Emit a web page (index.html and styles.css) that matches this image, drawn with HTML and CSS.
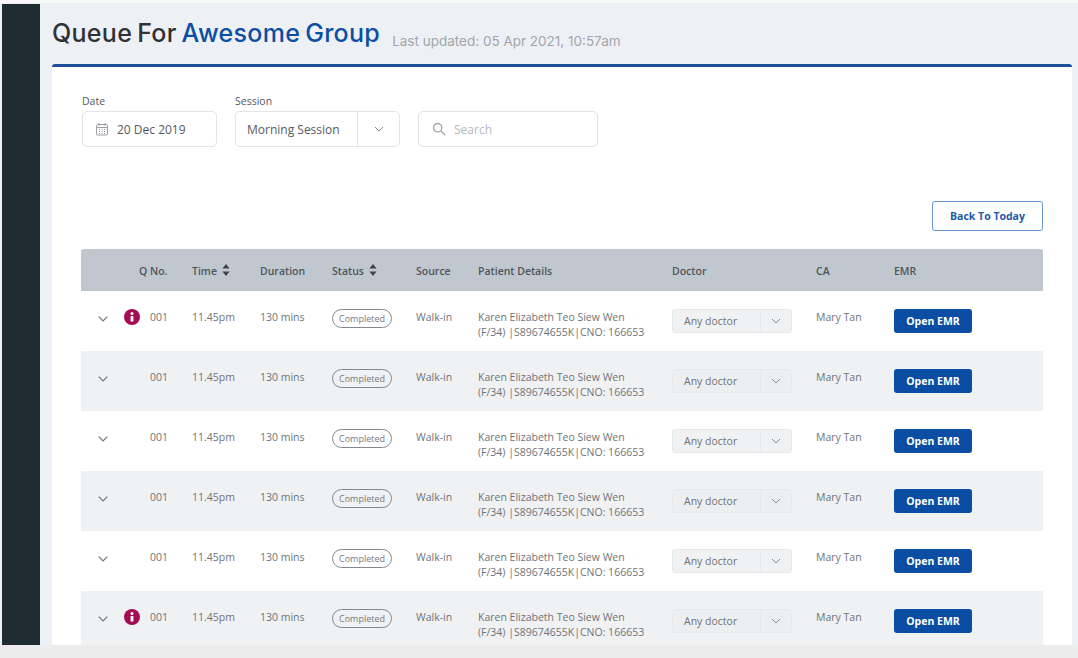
FILE: index.html
```html
<!DOCTYPE html>
<html lang="en">
<head>
  <meta charset="UTF-8" />
  <title>Queue For Awesome Group</title>
  <link rel="stylesheet" href="styles.css">
</head>
<body>
  <div class="app">
    <aside class="sidebar"></aside>
    <div class="content">
      <header class="page-head">
        <h1>Queue For <span>Awesome Group</span></h1>
        <p>Last updated: 05 Apr 2021, 10:57am</p>
      </header>

      <main class="card">
        <div class="filters">
          <div class="field date-field">
            <label>Date</label>
            <div class="input">
              <svg class="ico" width="14" height="14" viewBox="0 0 14 14" fill="none" stroke="#9a9fa5" stroke-width="1"><rect x="1.500" y="2.500" width="11" height="10.500" rx="1"/><path d="M1.500 5.500h11M4 1v3M10 1v3"/><path d="M4 7.500h1M6.500 7.500h1M9 7.500h1M4 9.500h1M6.500 9.500h1M9 9.500h1M4 11.500h1M6.500 11.500h1M9 11.500h1"/></svg>
              <span>20 Dec 2019</span>
            </div>
          </div>
          <div class="field session-field">
            <label>Session</label>
            <div class="input select">
              <span>Morning Session</span>
              <div class="caret"><svg width="10" height="6" viewBox="0 0 10 6" fill="none" stroke="#8b9096" stroke-width="1"><path d="M1 1l4 4 4-4"/></svg></div>
            </div>
          </div>
          <div class="field search-field">
            <div class="input">
              <svg class="ico" width="14" height="14" viewBox="0 0 14 14" fill="none" stroke="#a3a7ac" stroke-width="1.300"><circle cx="5.700" cy="5.700" r="4.200"/><path d="M8.800 8.800l4.400 4.400"/></svg>
              <span class="placeholder">Search</span>
            </div>
          </div>
        </div>

        <div class="actions">
          <button class="btn-outline">Back To Today</button>
        </div>

        <div class="table">
          <div class="row head">
            <div></div>
            <div class="qno">Q No.</div>
            <div class="sortable">Time <svg width="8" height="12" viewBox="0 0 8 12" fill="#3f4448"><path d="M4 0l3.600 4.400H.4zM4 12L.4 7.600h7.200z"/></svg></div>
            <div>Duration</div>
            <div class="sortable">Status <svg width="8" height="12" viewBox="0 0 8 12" fill="#3f4448"><path d="M4 0l3.600 4.400H.4zM4 12L.4 7.600h7.200z"/></svg></div>
            <div>Source</div>
            <div>Patient Details</div>
            <div>Doctor</div>
            <div>CA</div>
            <div>EMR</div>
          </div>

          <div class="row">
            <div class="lead">
              <svg class="chev" width="10" height="6" viewBox="0 0 10 6" fill="none" stroke="#6f7479" stroke-width="1.200"><path d="M.7.7L5 5 9.300.7"/></svg>
              <svg class="info" width="16" height="16" viewBox="0 0 16 16"><circle cx="8" cy="8" r="8" fill="#a50a55"/><circle cx="8" cy="4.600" r="1.500" fill="#fff"/><rect x="6.600" y="7" width="2.800" height="5.500" fill="#fff"/></svg>
            </div>
            <div class="qno">001</div>
            <div>11.45pm</div>
            <div>130 mins</div>
            <div><span class="pill">Completed</span></div>
            <div>Walk-in</div>
            <div class="patient">Karen Elizabeth Teo Siew Wen<br>(F/34) |S89674655K|CNO: 166653</div>
            <div><div class="doctor"><span>Any doctor</span><div class="caret"><svg width="10" height="6" viewBox="0 0 10 6" fill="none" stroke="#8b9096" stroke-width="1"><path d="M1 1l4 4 4-4"/></svg></div></div></div>
            <div>Mary Tan</div>
            <div><button class="btn-emr">Open EMR</button></div>
          </div>

          <div class="row alt">
            <div class="lead">
              <svg class="chev" width="10" height="6" viewBox="0 0 10 6" fill="none" stroke="#6f7479" stroke-width="1.200"><path d="M.7.7L5 5 9.300.7"/></svg>
            </div>
            <div class="qno">001</div>
            <div>11.45pm</div>
            <div>130 mins</div>
            <div><span class="pill">Completed</span></div>
            <div>Walk-in</div>
            <div class="patient">Karen Elizabeth Teo Siew Wen<br>(F/34) |S89674655K|CNO: 166653</div>
            <div><div class="doctor"><span>Any doctor</span><div class="caret"><svg width="10" height="6" viewBox="0 0 10 6" fill="none" stroke="#8b9096" stroke-width="1"><path d="M1 1l4 4 4-4"/></svg></div></div></div>
            <div>Mary Tan</div>
            <div><button class="btn-emr">Open EMR</button></div>
          </div>

          <div class="row">
            <div class="lead">
              <svg class="chev" width="10" height="6" viewBox="0 0 10 6" fill="none" stroke="#6f7479" stroke-width="1.200"><path d="M.7.7L5 5 9.300.7"/></svg>
            </div>
            <div class="qno">001</div>
            <div>11.45pm</div>
            <div>130 mins</div>
            <div><span class="pill">Completed</span></div>
            <div>Walk-in</div>
            <div class="patient">Karen Elizabeth Teo Siew Wen<br>(F/34) |S89674655K|CNO: 166653</div>
            <div><div class="doctor"><span>Any doctor</span><div class="caret"><svg width="10" height="6" viewBox="0 0 10 6" fill="none" stroke="#8b9096" stroke-width="1"><path d="M1 1l4 4 4-4"/></svg></div></div></div>
            <div>Mary Tan</div>
            <div><button class="btn-emr">Open EMR</button></div>
          </div>

          <div class="row alt">
            <div class="lead">
              <svg class="chev" width="10" height="6" viewBox="0 0 10 6" fill="none" stroke="#6f7479" stroke-width="1.200"><path d="M.7.7L5 5 9.300.7"/></svg>
            </div>
            <div class="qno">001</div>
            <div>11.45pm</div>
            <div>130 mins</div>
            <div><span class="pill">Completed</span></div>
            <div>Walk-in</div>
            <div class="patient">Karen Elizabeth Teo Siew Wen<br>(F/34) |S89674655K|CNO: 166653</div>
            <div><div class="doctor"><span>Any doctor</span><div class="caret"><svg width="10" height="6" viewBox="0 0 10 6" fill="none" stroke="#8b9096" stroke-width="1"><path d="M1 1l4 4 4-4"/></svg></div></div></div>
            <div>Mary Tan</div>
            <div><button class="btn-emr">Open EMR</button></div>
          </div>

          <div class="row">
            <div class="lead">
              <svg class="chev" width="10" height="6" viewBox="0 0 10 6" fill="none" stroke="#6f7479" stroke-width="1.200"><path d="M.7.7L5 5 9.300.7"/></svg>
            </div>
            <div class="qno">001</div>
            <div>11.45pm</div>
            <div>130 mins</div>
            <div><span class="pill">Completed</span></div>
            <div>Walk-in</div>
            <div class="patient">Karen Elizabeth Teo Siew Wen<br>(F/34) |S89674655K|CNO: 166653</div>
            <div><div class="doctor"><span>Any doctor</span><div class="caret"><svg width="10" height="6" viewBox="0 0 10 6" fill="none" stroke="#8b9096" stroke-width="1"><path d="M1 1l4 4 4-4"/></svg></div></div></div>
            <div>Mary Tan</div>
            <div><button class="btn-emr">Open EMR</button></div>
          </div>

          <div class="row alt">
            <div class="lead">
              <svg class="chev" width="10" height="6" viewBox="0 0 10 6" fill="none" stroke="#6f7479" stroke-width="1.200"><path d="M.7.7L5 5 9.300.7"/></svg>
              <svg class="info" width="16" height="16" viewBox="0 0 16 16"><circle cx="8" cy="8" r="8" fill="#a50a55"/><circle cx="8" cy="4.600" r="1.500" fill="#fff"/><rect x="6.600" y="7" width="2.800" height="5.500" fill="#fff"/></svg>
            </div>
            <div class="qno">001</div>
            <div>11.45pm</div>
            <div>130 mins</div>
            <div><span class="pill">Completed</span></div>
            <div>Walk-in</div>
            <div class="patient">Karen Elizabeth Teo Siew Wen<br>(F/34) |S89674655K|CNO: 166653</div>
            <div><div class="doctor"><span>Any doctor</span><div class="caret"><svg width="10" height="6" viewBox="0 0 10 6" fill="none" stroke="#8b9096" stroke-width="1"><path d="M1 1l4 4 4-4"/></svg></div></div></div>
            <div>Mary Tan</div>
            <div><button class="btn-emr">Open EMR</button></div>
          </div>
        </div>
      </main>
    </div>
  </div>
  <div class="bottom-strip"></div>
</body>
</html>
```

FILE: styles.css
```css
html, body {
  margin: 0;
  padding: 0;
  height: 100%;
  overflow: hidden;
}
body {
  font-family: 'Open Sans', sans-serif;
  background-color: #f8f8f8;
  color: #6b7075;
}
.app {
  display: flex;
  height: 642px;
  margin-top: 3px;
  padding-left: 2px;
  background-color: #edf0f5;
  overflow: hidden;
}
.bottom-strip {
  height: 13px;
  background-color: #ececec;
}
.sidebar {
  width: 38px;
  margin-top: 1px;
  flex-shrink: 0;
  background-color: #1f2d33;
}
.content {
  flex: 1;
  min-width: 0;
  display: flex;
  flex-direction: column;
  padding: 0 6px 0 12px;
}

.page-head {
  height: 61px;
  flex-shrink: 0;
  display: flex;
  align-items: flex-start;
}
.page-head h1 {
  margin: 15px 0 0;
  font-family: 'Inter', sans-serif;
  font-size: 25px;
  line-height: 30px;
  font-weight: 500;
  letter-spacing: 0.3px;
  word-spacing: -2px;
  color: #2f3235;
}
.page-head h1 span {
  color: #0b4ea2;
}
.page-head p {
  margin: 27px 0 0 12px;
  font-family: 'Inter', sans-serif;
  font-size: 13.5px;
  line-height: 22px;
  color: #a3a6aa;
}

.card {
  flex: 1;
  min-height: 0;
  background-color: #fff;
  border-top: 3px solid #1d4f9f;
  border-radius: 3px 3px 0 0;
  padding: 0 29px;
  overflow: hidden;
}

.filters {
  display: flex;
  align-items: flex-end;
  gap: 18px;
  padding: 27px 0 0 1px;
}
.field label {
  display: block;
  font-size: 10.5px;
  line-height: 14px;
  margin-bottom: 3px;
  color: #55595e;
}
.input {
  height: 34px;
  display: flex;
  align-items: center;
  border: 1px solid #e1e4e8;
  border-radius: 5px;
  font-size: 12px;
  color: #55595e;
}
.date-field .input {
  padding-left: 12px;
  width: 121px;
}
.date-field .ico {
  margin-right: 8px;
}
.session-field .input {
  width: 163px;
}
.session-field .input > span {
  flex: 1;
  padding-left: 11px;
}
.session-field .caret {
  width: 41px;
  height: 100%;
  border-left: 1px solid #e1e4e8;
  display: flex;
  align-items: center;
  justify-content: center;
}
.search-field .input {
  width: 165px;
  padding-left: 13px;
}
.search-field .ico {
  margin-right: 8px;
}
.placeholder {
  color: #b5b8bc;
}

.actions {
  display: flex;
  justify-content: flex-end;
  padding-top: 54px;
}
.btn-outline {
  width: 111px;
  height: 30px;
  background-color: #fff;
  border: 1px solid #6a97d4;
  border-radius: 3px;
  font-family: 'Open Sans', sans-serif;
  font-size: 10.5px;
  font-weight: 700;
  color: #1d5aa8;
  padding: 0;
}

.table {
  margin-top: 18px;
}
.row {
  display: grid;
  grid-template-columns: 58px 53px 68px 72px 84px 62px 194px 144px 78px 1fr;
  align-items: start;
  height: 60px;
  box-sizing: border-box;
  padding-top: 18px;
  font-size: 10.5px;
  line-height: 16px;
  color: #6f7378;
}
.row.alt {
  background-color: #f0f1f3;
}
.row.head {
  height: 42px;
  padding-top: 2px;
  align-items: center;
  background-color: #c1c7cf;
  border-radius: 3px 3px 0 0;
  font-weight: 600;
  color: #50555a;
}
.qno {
  padding-right: 24px;
  text-align: right;
}
.head .qno {
  text-align: left;
  padding-right: 0;
}
.sortable svg {
  margin-left: 2px;
  vertical-align: -1px;
}
.lead {
  position: relative;
  height: 16px;
}
.chev {
  position: absolute;
  left: 17px;
  top: 7px;
}
.info {
  position: absolute;
  left: 43px;
  top: 0;
}
.pill {
  display: inline-block;
  width: 60px;
  height: 19px;
  box-sizing: border-box;
  border: 1px solid #85898e;
  border-radius: 10px;
  font-size: 9px;
  line-height: 18px;
  text-align: center;
  color: #777b80;
}
.patient {
  line-height: 15px;
  padding-top: 1px;
}
.doctor {
  width: 120px;
  height: 24px;
  display: flex;
  align-items: center;
  background-color: #f0f1f3;
  border: 1px solid #e6e8eb;
  border-radius: 3px;
  box-sizing: border-box;
}
.alt .doctor {
  background-color: #eceef0;
}
.doctor > span {
  flex: 1;
  padding-left: 11px;
}
.doctor .caret {
  width: 30px;
  height: 100%;
  border-left: 1px solid #e6e8eb;
  display: flex;
  align-items: center;
  justify-content: center;
}
.btn-emr {
  width: 78px;
  height: 24px;
  background-color: #0a4da2;
  border: none;
  border-radius: 3px;
  font-family: 'Open Sans', sans-serif;
  font-size: 10.5px;
  font-weight: 700;
  color: #fff;
  padding: 0;
}
```
